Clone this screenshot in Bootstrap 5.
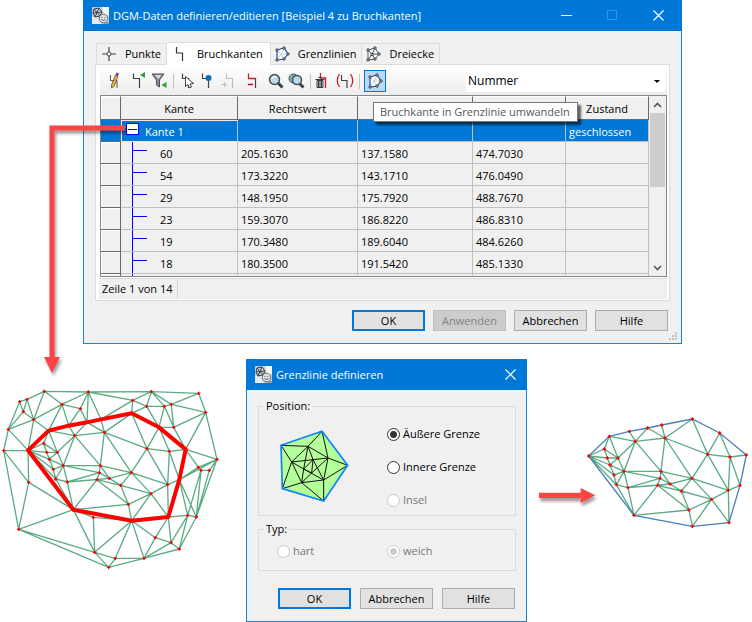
<!DOCTYPE html>
<html lang="de">
<head>
<meta charset="utf-8">
<meta name="viewport" content="width=device-width, initial-scale=1">
<title>DGM-Daten definieren/editieren</title>
<link href="https://cdn.jsdelivr.net/npm/bootstrap@5.3.0/dist/css/bootstrap.min.css" rel="stylesheet">
<style>
body{font-family:"Open Sans","Noto Sans",sans-serif;font-size:11px;line-height:16px;color:#000;background:#fff}
svg{display:block;flex:none}
button{font:inherit;color:inherit;padding:0;border:0;background:none}
.win{background:#f0f0f0;border:1px solid #1883d7;border-top:0}
.win-main{margin:0 70px 0 83px}
.win-sub{width:281px;margin-top:15px}
.titlebar{background:#0078d7;color:#fff;height:31px;margin:0 -1px;padding:0 1px 0 9px}
.capbtn{width:46px;height:30px}
.sub-close{width:31px}
.sheet-tabs{padding:11px 0 0 12px}
.sheet-tab{height:21px;border:1px solid #dcdcdc;border-bottom:0;border-left:0;padding:0 5px 0 3px;gap:8px}
.sheet-tab:first-child{border-left:1px solid #dcdcdc;padding-left:4px}
.sheet-tab.active{height:23px;background:#fff;padding:0 7px 1px 8px;margin-bottom:-1px;z-index:1}
.sheet{background:#fff;border:1px solid #dcdcdc;margin:0 11px;padding:4px 2px 1px 4px}
.toolrow{height:26px;background:linear-gradient(#fdfdfd,#ececec);padding:0 2px 2px 5px}
.toolrow .tb{width:20px;height:20px;display:flex;align-items:center;justify-content:center;flex:none}
.toolrow .tb.sel{width:22px;height:22px;background:#b8d9f5;border:1px solid #0078d7}
.vsep{width:1px;height:15px;background:#c4c4c4;flex:none}
.sortby{width:199px;height:22px;border:0;background:#fff;padding:0 2px;appearance:none;font-size:12px;color:#000}
.sortwrap{width:199px}
.sortwrap svg{right:5px;top:10px;pointer-events:none}
.gridbox{border:1px solid #828790;height:182px;overflow:hidden}
.gridbox table{table-layout:fixed;width:100%;border-collapse:separate;border-spacing:0}
.gridbox th{height:24px;font-weight:400;text-align:center;border-right:1px solid #696969;border-bottom:1px solid #696969;border-top:1px solid #fff;background:#f0f0f0;padding:1px 0 0}
.gridbox td{height:22px;background-color:#f0f0f0;border-right:1px solid #c0c0c0;border-bottom:1px solid #c0c0c0;padding:3px 0 0 3px;white-space:nowrap}
.gridbox td.gut,.gridbox th.gut{border-right:1px solid #696969;border-bottom:1px solid #696969;padding:0;box-shadow:inset 1px 1px #fff}
.gridbox td.branch{padding-left:39px;background:linear-gradient(#00f,#00f) 11px 0/1px 22px no-repeat,linear-gradient(#00f,#00f) 11px 8px/15px 1px no-repeat,#f0f0f0}
.gridbox tr.cur td{background:#0078d7;color:#fff}
.gridbox tr.cur td.gut{box-shadow:none}
.gridbox tr.cur td.node{padding:0;border:1px solid #e8e8e8;border-right-color:#c0c0c0;vertical-align:top}
.node span{padding-top:3px}
.expander{width:13px;height:12px;background:#fff;border:1px solid #00f;margin:2px 6px 0 4px;display:flex;align-items:center;justify-content:center}
.expander i{width:9px;height:1px;background:#00f}
.vbar{width:17px;flex:none;background:#f0f0f0}
.vbar .step{height:17px;display:flex;align-items:center;justify-content:center}
.vbar .thumb{height:74px;background:#cdcdcd;margin:0 1px}
.statusline{margin:1px 0 0 -1px;border-top:1px solid #dcdcdc;background:#f0f0f0;height:21px}
.statusline span{border-right:1px solid #d4d4d4;padding:2px 4px 0 3px}
.push{width:73px;height:21px;background:#e1e1e1;border:1px solid #adadad;line-height:19px;text-align:center}
.push.main{border:2px solid #0078d7;line-height:17px}
.push:disabled{background:#ccc;border-color:#bfbfbf;color:#838383}
.footer-main{padding:9px 13px 12px 0}
.tip{left:373px;top:102px;height:20px;border:1px solid #767676;background:#fff;color:#575757;padding:1px 7px 1px 6px;box-shadow:3px 3px 2px rgba(0,0,0,.6);white-space:nowrap;z-index:3}
.leader{left:0;top:0;z-index:4;pointer-events:none}
.grip{right:3px;bottom:2px}
.subform{padding:9px 10px 12px 11px}
.groupbox{border:1px solid #dcdcdc;margin:0;min-width:0}
.groupbox legend{float:none;width:auto;font-size:11px;line-height:14px;margin:0 0 0 5px;padding:0 2px}
.g-pos{height:117px}
.g-typ{height:49px;margin-top:6px}
.opt{gap:3px;line-height:14px}
.opt input{appearance:none;width:13px;height:13px;border:1px solid #333;border-radius:50%;background:#fff;margin:0;flex:none}
.opt input:checked{background:radial-gradient(circle,#333 3px,#fff 4px)}
.opt input:disabled{border-color:#ccc}
.opt input:disabled:checked{background:radial-gradient(circle,#ccc 3px,#fff 4px)}
.opt.off{color:#787878}
.penta{margin:15px 0 0 19px}
.opts-pos{margin:14px 0 0 37px;gap:19px}
.opts-typ{padding:8px 0 0 18px}
.opts-typ .opt{width:110px}
.subbtns{gap:9px;padding:17px 1px 0 0}
.mesh-left{margin-top:36px}
.mesh-right{margin:66px 0 0 8px}
</style>
<script src="https://cdn.jsdelivr.net/npm/bootstrap@5.3.0/dist/js/bootstrap.bundle.min.js"></script>
</head>
<body class="position-relative">

<svg width="0" height="0" class="position-absolute" aria-hidden="true">
  <defs>
    <symbol id="i-app" viewBox="0 0 17 17">
      <rect width="17" height="17" rx="1" fill="#c9cdd1"/><path d="M10 0h7v8h-5z" fill="#f6f6f6"/><path d="M0 10h7l2 7H0z" fill="#e6e8ea"/>
      <path d="M2 2l5-1 3 4-2 4-5 1-2-4zM2 2l6 7M7 1L3 10M1 6l9-1" fill="none" stroke="#38424a" stroke-width="1"/>
      <circle cx="11.500" cy="11.500" r="4.300" fill="#e0e3e5" stroke="#59636b" stroke-width=".9"/><path d="M9.500 10.500h1M12.500 10.500h1M9.500 12.500q2 2 4 0" fill="none" stroke="#3f4a52" stroke-width=".9"/>
      <path d="M13 15h4v2h-5z" fill="#8c969e"/>
    </symbol>
    <symbol id="i-point" viewBox="0 0 14 14"><path d="M7 0v5M7 9v5M0 7h5M9 7h5" stroke="#3c4248" stroke-width="1.200"/><circle cx="7" cy="7" r="2" fill="#fff" stroke="#3c4248"/></symbol>
    <symbol id="i-edge" viewBox="0 0 10 16"><path d="M1.500 1v6H7.500V15" fill="none" stroke="#30363c" stroke-width="1.200"/></symbol>
    <symbol id="i-hull" viewBox="0 0 16 16"><path d="M3 4l7-2 4 6-4 5-7 1z" fill="#fff"/><path d="M3 4l4 4.500L10 2M14 8H7l-4 6M7 8.500L10 13" fill="none" stroke="#c3c8cc" stroke-width=".9"/><path d="M3 4l7-2 4 6-4 5-7 1z" fill="none" stroke="#24509a" stroke-width="1.200"/><path d="M2 3h2v2H2zM9 1h2v2H9zM13 7h2v2h-2zM9 12h2v2H9zM2 13h2v2H2z" fill="#fff" stroke="#2d343b" stroke-width=".9"/></symbol>
    <symbol id="i-tri" viewBox="0 0 16 16"><path d="M3 4l7-2 4 6-4 5-7 1zM3 4l4 4.500L10 2M14 8H7l-4 6M7 8.500L10 13" fill="#fff" stroke="#3d444b" stroke-width=".9"/><path d="M2 3h2v2H2zM9 1h2v2H9zM13 7h2v2h-2zM9 12h2v2H9zM2 13h2v2H2zM6 7.500h2v2H6z" fill="#fff" stroke="#2d343b" stroke-width=".9"/></symbol>
    <symbol id="i-lens" viewBox="0 0 16 16"><path d="M10 10l4.500 4.500" stroke="#39424a" stroke-width="3"/><circle cx="6.500" cy="6.500" r="5" fill="#bcd9e6" stroke="#444e57" stroke-width="1.500"/><path d="M4 6q1-3 4-2" fill="none" stroke="#fff" stroke-width="1.200"/></symbol>
  </defs>
</svg>

<svg class="leader position-absolute" width="150" height="382" viewBox="0 0 150 382" aria-hidden="true">
  <defs><filter id="sh" x="-20%" y="-20%" width="150%" height="150%"><feDropShadow dx="1.500" dy="3" stdDeviation="1.500" flood-color="#000" flood-opacity=".4"/></filter></defs>
  <g filter="url(#sh)"><path d="M125 128H52V358" fill="none" stroke="#fb4545" stroke-width="5"/><path d="M44 357h16l-8 16z" fill="#fb4545"/></g>
</svg>

<main>
<section class="win win-main position-relative">
  <header class="titlebar d-flex align-items-center">
    <svg class="me-1" width="17" height="17"><use href="#i-app"/></svg>
    <span class="flex-grow-1 text-truncate">DGM-Daten definieren/editieren [Beispiel 4 zu Bruchkanten]</span>
    <button class="capbtn" aria-label="Minimieren"><svg class="mx-auto" width="11" height="11"><path d="M0 5.500h11" stroke="#fff"/></svg></button>
    <button class="capbtn" aria-label="Maximieren"><svg class="mx-auto" width="11" height="11"><path d="M.5.5h9v9h-9z" fill="none" stroke="#3393df"/></svg></button>
    <button class="capbtn" aria-label="Schließen"><svg class="mx-auto" width="11" height="11"><path d="M.5.5l10 10M10.500.5l-10 10" stroke="#fff" stroke-width="1.200"/></svg></button>
  </header>

  <nav class="sheet-tabs d-flex align-items-end">
    <button class="sheet-tab d-flex align-items-center"><svg width="16" height="14"><use href="#i-point"/></svg>Punkte</button>
    <button class="sheet-tab active d-flex align-items-center position-relative"><svg class="me-1" width="10" height="16"><use href="#i-edge"/></svg>Bruchkanten</button>
    <button class="sheet-tab d-flex align-items-center"><svg width="16" height="16"><use href="#i-hull"/></svg>Grenzlinien</button>
    <button class="sheet-tab d-flex align-items-center"><svg width="16" height="16"><use href="#i-tri"/></svg>Dreiecke</button>
  </nav>

  <div class="sheet">
    <div class="toolrow d-flex align-items-center">
      <button class="tb" aria-label="Kante bearbeiten"><svg width="14" height="18"><path d="M2.500 3v5.500H9V16" fill="none" stroke="#555"/><path d="M3.500 13L7.500 3l2.500 1L6 14.500 3.500 16z" fill="#e7b431" stroke="#4c4433" stroke-width=".7"/><path d="M7.500 3l1-2.500L11 1.500 10 4z" fill="#70408c"/></svg></button>
      <button class="tb ms-1" aria-label="Kante hinzufügen"><svg width="14" height="18"><path d="M1.500 1.500v5h6V16" fill="none" stroke="#3c434a" stroke-width="1.200"/><path d="M13 0v6L8 3z" fill="#27a138"/></svg></button>
      <button class="tb" aria-label="Filter"><svg width="16" height="18"><path d="M1 2h12L8.500 8v7l-3-2V8z" fill="#8a9298" stroke="#474e55"/><path d="M4 3h6L7.500 7z" fill="#dce0e3"/><path d="M15.500 10v6l-5-3z" fill="#27a138"/></svg></button>
      <span class="vsep ms-1 me-1"></span>
      <button class="tb" aria-label="Kante wählen"><svg width="14" height="18"><path d="M1.500 1.500v5h6V16" fill="none" stroke="#3c434a" stroke-width="1.200"/><path d="M4.500 4.500v10L7 12.500 8.500 16l2-1L9 12l3.500-.5z" fill="#fff" stroke="#3c434a"/></svg></button>
      <button class="tb" aria-label="Punkt wählen"><svg width="14" height="18"><path d="M1.500 1.500v5h6V16" fill="none" stroke="#3c434a" stroke-width="1.200"/><circle cx="7.500" cy="6" r="3" fill="#0870b8"/></svg></button>
      <button class="tb" aria-label="Punkt einfügen" disabled><svg width="14" height="18"><path d="M5.500 1.500v5h6V16M1 12.500h5M3.500 10v5" fill="none" stroke="#b9bdc0" stroke-width="1.100"/></svg></button>
      <button class="tb ms-1 me-1" aria-label="Punkt entfernen"><svg width="14" height="18"><path d="M3.500 1.500v5h7" fill="none" stroke="#c8202e" stroke-width="1.300"/><path d="M10.500 6v10" stroke="#3c434a" stroke-width="1.200"/><path d="M3 12.500h5" stroke="#d0021b" stroke-width="1.500"/></svg></button>
      <button class="tb" aria-label="Suchen"><svg width="16" height="16"><use href="#i-lens"/></svg></button>
      <button class="tb" aria-label="Weitersuchen"><svg width="17" height="16" viewBox="0 0 17 16"><circle cx="5.500" cy="5.500" r="4.500" fill="#8fa9b5" stroke="#444e57"/><g transform="translate(2 0)"><path d="M9 10l4.500 4.500" stroke="#39424a" stroke-width="3"/><circle cx="7" cy="7" r="4.500" fill="#bcd9e6" stroke="#444e57" stroke-width="1.500"/></g></svg></button>
      <span class="vsep ms-1"></span>
      <button class="tb" aria-label="Kante löschen"><svg width="14" height="18"><path d="M6.500 1v5h5v10" fill="none" stroke="#c8202e" stroke-width="1.300"/><path d="M3 8.500h6v7H3z" fill="#eee" stroke="#333a40"/><path d="M1.500 7.500h9M4.500 5.500h3M4.500 9v6M6 9v6M7.500 9v6" stroke="#333a40"/></svg></button>
      <button class="tb ms-1" aria-label="Kante schließen"><svg width="18" height="18"><path d="M5.500 3v5.500H11V16" fill="none" stroke="#3c434a" stroke-width="1.200"/><path d="M3.500 2Q-1 8.500 3.500 15M14.500 2q4.500 6.500 0 13" fill="none" stroke="#c8202e" stroke-width="1.300"/></svg></button>
      <span class="vsep ms-1 me-1"></span>
      <button class="tb sel" aria-label="Bruchkante in Grenzlinie umwandeln"><svg width="16" height="16"><use href="#i-hull"/></svg></button>
      <div class="sortwrap position-relative ms-auto">
        <select class="sortby" aria-label="Sortierung"><option>Nummer</option></select>
        <svg class="position-absolute" width="6" height="3"><path d="M0 0h6L3 3z" fill="#000"/></svg>
      </div>
    </div>

    <div class="gridbox d-flex">
      <div class="flex-grow-1">
      <table>
        <colgroup><col style="width:20px"><col style="width:117px"><col style="width:120px"><col style="width:115px"><col style="width:93px"><col></colgroup>
        <thead><tr><th class="gut"></th><th>Kante</th><th>Rechtswert</th><th></th><th></th><th>Zustand</th></tr></thead>
        <tbody>
          <tr class="cur"><td class="gut"></td><td class="node"><div class="d-flex align-items-start"><button class="expander" aria-label="Kante 1 zuklappen"><i></i></button><span>Kante 1</span></div></td><td></td><td></td><td></td><td>geschlossen</td></tr>
          <tr><td class="gut"></td><td class="branch">60</td><td>205.1630</td><td>137.1580</td><td>474.7030</td><td></td></tr>
          <tr><td class="gut"></td><td class="branch">54</td><td>173.3220</td><td>143.1710</td><td>476.0490</td><td></td></tr>
          <tr><td class="gut"></td><td class="branch">29</td><td>148.1950</td><td>175.7920</td><td>488.7670</td><td></td></tr>
          <tr><td class="gut"></td><td class="branch">23</td><td>159.3070</td><td>186.8220</td><td>486.8310</td><td></td></tr>
          <tr><td class="gut"></td><td class="branch">19</td><td>170.3480</td><td>189.6040</td><td>484.6260</td><td></td></tr>
          <tr><td class="gut"></td><td class="branch">18</td><td>180.3500</td><td>191.5420</td><td>485.1330</td><td></td></tr>
          <tr><td class="gut"></td><td class="branch"></td><td></td><td></td><td></td><td></td></tr>
        </tbody>
      </table>
      </div>
      <div class="vbar d-flex flex-column">
        <button class="step" aria-label="Nach oben"><svg width="9" height="6"><path d="M1 5l3.500-3.500L8 5" fill="none" stroke="#555" stroke-width="1.600"/></svg></button>
        <div class="thumb"></div>
        <button class="step mt-auto" aria-label="Nach unten"><svg width="9" height="6"><path d="M1 1l3.500 3.500L8 1" fill="none" stroke="#555" stroke-width="1.600"/></svg></button>
      </div>
    </div>
    <div class="statusline d-flex"><span>Zeile 1 von 14</span></div>
  </div>

  <footer class="d-flex justify-content-end gap-2 footer-main">
    <button class="push main">OK</button>
    <button class="push" disabled>Anwenden</button>
    <button class="push">Abbrechen</button>
    <button class="push">Hilfe</button>
  </footer>
  <svg class="grip position-absolute" width="9" height="9"><path d="M6 0h2v2H6zM3 3h2v2H3zM6 3h2v2H6zM0 6h2v2H0zM3 6h2v2H3zM6 6h2v2H6z" fill="#bfbfbf"/></svg>
</section>
<div class="tip position-absolute" role="tooltip">Bruchkante in Grenzlinie umwandeln</div>

<section class="d-flex align-items-start">
  <svg id="meshAll" class="mesh-left" width="246" height="192" viewBox="0 0 738 576" role="img" aria-label="Dreiecksnetz mit Bruchkante"></svg>

  <div class="win win-sub flex-shrink-0">
    <header class="titlebar d-flex align-items-center">
      <svg class="me-1" width="17" height="17"><use href="#i-app"/></svg>
      <span class="flex-grow-1">Grenzlinie definieren</span>
      <button class="capbtn sub-close" aria-label="Schließen"><svg class="mx-auto" width="11" height="11"><path d="M.5.5l10 10M10.500.5l-10 10" stroke="#fff" stroke-width="1.200"/></svg></button>
    </header>
    <form class="subform" onsubmit="return false">
      <fieldset class="groupbox g-pos">
        <legend>Position:</legend>
        <div class="d-flex">
          <svg class="penta" width="72" height="76" viewBox="115 220 216 228" aria-hidden="true">
            <path d="M247 230L324 332 252 439 128 402 124 272z" fill="#b3ff99"/>
            <path d="M124 272L205 275 265 310 252 376 186 384 156 322zM156 322L128 402 186 384 252 439 252 376 324 332 265 310 247 230 205 275 156 322M156 322L220 315 265 310 216 355 186 384 192 343 156 322M205 275L220 315 192 343 205 275M220 315L216 355 192 343 252 376 220 315" fill="none" stroke="#111" stroke-width="3"/>
            <path d="M247 230L324 332 252 439 128 402 124 272z" fill="none" stroke="#0a84ff" stroke-width="5"/>
          </svg>
          <div class="d-flex flex-column opts-pos">
            <label class="opt d-flex align-items-center"><input type="radio" name="pos" checked>Äußere Grenze</label>
            <label class="opt d-flex align-items-center"><input type="radio" name="pos">Innere Grenze</label>
            <label class="opt off d-flex align-items-center"><input type="radio" name="pos" disabled>Insel</label>
          </div>
        </div>
      </fieldset>
      <fieldset class="groupbox g-typ">
        <legend>Typ:</legend>
        <div class="d-flex opts-typ">
          <label class="opt off d-flex align-items-center"><input type="radio" name="typ" disabled>hart</label>
          <label class="opt off d-flex align-items-center"><input type="radio" name="typ" checked disabled>weich</label>
        </div>
      </fieldset>
      <div class="d-flex justify-content-end subbtns">
        <button class="push main">OK</button>
        <button class="push">Abbrechen</button>
        <button class="push">Hilfe</button>
      </div>
    </form>
  </div>

  <svg id="meshCut" class="mesh-right" width="217" height="125" viewBox="0 0 651 375" role="img" aria-label="Netz innerhalb der Grenzlinie">
    <defs><filter id="sh3" x="-20%" y="-20%" width="150%" height="200%"><feDropShadow dx="4" dy="10" stdDeviation="5" flood-color="#000" flood-opacity=".4"/></filter></defs>
    <g filter="url(#sh3)"><path d="M12 248H137V234L181 256 137 279V264H12z" fill="#fb4545"/></g>
  </svg>
</section>
</main>

<script>
// Survey points in thirds of a pixel.
const P=[[133,34],[81,58],[59,65],[70,95],[101,119],[25,148],[11,212],[186,73],[241,86],[265,36],[146,152],[224,167],[313,157],[84,211],[131,190],[140,217],[172,217],[148,238],[160,268],[190,257],[167,297],[202,306],[86,307],[56,448],[220,389],[301,257],[298,278],[291,299],[328,295],[280,412],[284,517],[326,562],[346,535],[454,35],[398,61],[440,79],[493,79],[514,73],[596,40],[617,97],[521,142],[395,100],[477,142],[557,208],[441,206],[508,214],[394,278],[362,316],[503,314],[453,341],[385,373],[395,422],[505,411],[538,299],[595,262],[603,271],[628,271],[651,238],[563,406],[589,411],[466,473],[513,488],[538,507],[432,535],[206,137],[261,127],[303,118]];
const ring=[13,10,64,65,66,41,42,43,53,52,51,24];
const inner="10-14 13-14 14-15 14-16 10-16 10-11 13-15 15-16 15-17 13-17 16-17 17-18 17-19 16-19 13-18 18-19 18-20 13-20 19-20 19-21 20-21 20-24 21-24 16-11 19-11 64-11 65-11 65-12 66-12 11-12 41-12 12-44 41-44 42-44 42-45 43-45 44-45 12-25 11-25 19-25 19-26 21-26 21-27 25-26 26-27 26-28 27-28 25-28 25-46 12-46 44-46 28-46 27-47 28-47 21-28 24-27 27-50 47-50 24-50 47-46 47-49 46-49 46-48 44-48 45-48 45-53 48-53 48-49 49-52 49-51 50-51 49-50 48-52";
const outer="0-1 1-2 2-3 1-3 3-4 1-4 0-4 2-5 3-5 5-4 5-6 5-13 6-13 4-13 4-10 0-7 4-7 7-9 0-9 7-8 8-9 7-10 7-64 8-64 8-65 9-65 9-66 9-34 9-33 34-66 34-41 34-33 34-35 35-41 33-35 33-36 33-37 33-38 35-36 35-42 36-42 36-40 37-40 36-37 37-38 37-39 38-39 39-40 40-42 40-43 39-43 39-57 43-57 43-54 53-54 54-57 54-55 55-56 56-57 53-57 56-59 57-59 55-58 53-58 53-59 52-58 58-59 55-59 52-60 52-61 60-61 60-63 61-63 61-62 58-61 59-62 58-62 63-62 51-63 51-60 51-32 32-63 32-31 31-63 30-31 30-32 30-51 29-30 29-24 29-51 24-30 23-30 23-31 23-24 22-23 22-24 13-22 6-22 6-23";
const path=s=>s.split(" ").map(e=>{const[a,b]=e.split("-");return"M"+P[a]+"L"+P[b]}).join("");
const loop="M"+ring.map(i=>P[i]).join("L")+"Z";
const dots=ids=>"<path fill='#f00' d='"+ids.map(i=>`M${P[i][0]-5} ${P[i][1]-2}h3v-3h4v3h3v4h-3v3h-4v-3h-3z`).join("")+"'/>";
const all=P.map((_,i)=>i);
const used=new Set([...ring,...inner.split(/[ -]/).map(Number)]);
const green="fill='none' stroke='#5cab84' stroke-width='4'";
document.getElementById("meshAll").innerHTML=`<path ${green} d="${path(inner+" "+outer)}"/><path fill="none" stroke="#f00" stroke-width="12" stroke-linejoin="round" d="${loop}"/>`+dots(all.filter(i=>i<64));
document.getElementById("meshCut").innerHTML+=`<g transform="translate(77 -73)"><path ${green} d="${path(inner)}"/><path fill="none" stroke="#4a80b8" stroke-width="4" d="${loop}"/>${dots([...used])}</g>`;
</script>
</body>
</html>
